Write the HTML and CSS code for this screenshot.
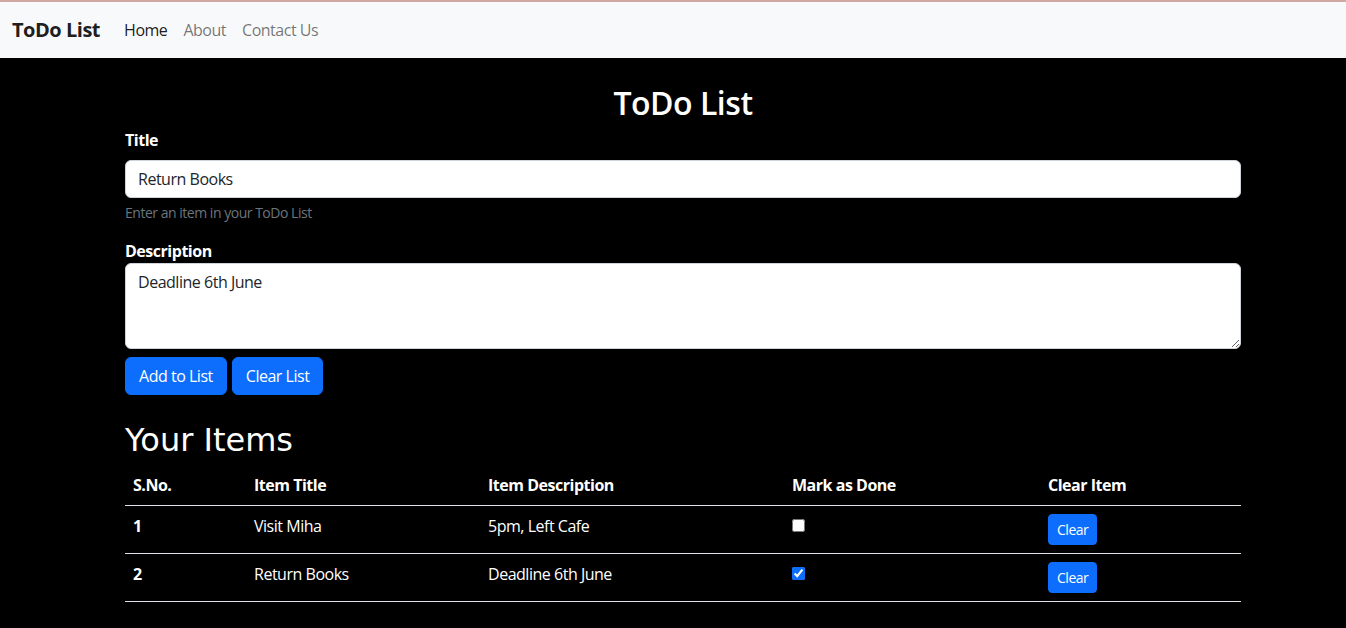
FILE: index.html
```html
<!DOCTYPE html>
<html lang="en">
<head>
<meta charset="utf-8">
<title>ToDo List</title>
<link rel="stylesheet" href="styles.css">
</head>
<body>
<nav class="navbar">
  <a class="brand" href="#">ToDo List</a>
  <ul class="nav-links">
    <li><a class="nav-link active" href="#">Home</a></li>
    <li><a class="nav-link" href="#">About</a></li>
    <li><a class="nav-link" href="#">Contact Us</a></li>
  </ul>
</nav>
<main class="container">
  <h2 class="page-title">ToDo List</h2>
  <div class="field field-title">
    <label class="label label-gap" for="title">Title</label>
    <input class="control" id="title" type="text" value="Return Books">
    <div class="form-text">Enter an item in your ToDo List</div>
  </div>
  <div class="field field-desc">
    <label class="label" for="desc">Description</label>
    <textarea class="control textarea" id="desc" rows="3">Deadline 6th June</textarea>
  </div>
  <div class="actions">
    <button class="btn">Add to List</button>
    <button class="btn">Clear List</button>
  </div>
  <h2 class="items-title">Your Items</h2>
  <table class="table">
    <thead>
      <tr>
        <th class="c1">S.No.</th>
        <th class="c2">Item Title</th>
        <th class="c3">Item Description</th>
        <th class="c4">Mark as Done</th>
        <th class="c5">Clear Item</th>
      </tr>
    </thead>
    <tbody>
      <tr>
        <th>1</th>
        <td>Visit Miha</td>
        <td>5pm, Left Cafe</td>
        <td><input class="check" type="checkbox"></td>
        <td><button class="btn btn-sm">Clear</button></td>
      </tr>
      <tr>
        <th>2</th>
        <td>Return Books</td>
        <td>Deadline 6th June</td>
        <td><input class="check" type="checkbox" checked></td>
        <td><button class="btn btn-sm">Clear</button></td>
      </tr>
    </tbody>
  </table>
</main>
</body>
</html>
```
FILE: styles.css
```css
* { box-sizing: border-box; }
html, body { margin: 0; padding: 0; }
body {
  background: #000;
  color: #fff;
  font-family: "Open Sans", "Noto Sans", sans-serif;
  font-size: 16px;
  line-height: 1.5;
  letter-spacing: -0.03em;
  min-height: 628px;
}
.navbar {
  display: flex;
  align-items: center;
  height: 58px;
  padding: 0 12px;
  background: #f8f9fa;
  border-top: 2px solid #d0a8a2;
}
.brand {
  font-size: 20px;
  font-weight: 700;
  color: rgba(0,0,0,.9);
  text-decoration: none;
  margin-right: 16px;
  line-height: 30px;
}
.nav-links {
  display: flex;
  list-style: none;
  margin: 0;
  padding: 0;
}
.nav-link {
  display: block;
  padding: 8px;
  color: rgba(0,0,0,.55);
  text-decoration: none;
}
.nav-link.active { color: rgba(0,0,0,.9); }
.container {
  width: 1116px;
  margin-left: 125px;
  padding: 0;
}
.page-title {
  font-size: 32px;
  font-weight: 600;
  line-height: 1.2;
  text-align: center;
  margin: 26px 0 6px;
}
.label {
  display: block;
  font-weight: 700;
}
.label-gap { margin-bottom: 8px; }
.field-title { margin-bottom: 16px; }
.field-desc { margin-bottom: 8px; }
.control {
  display: block;
  width: 100%;
  height: 38px;
  padding: 6px 12px;
  font: inherit;
  letter-spacing: inherit;
  color: #212529;
  background: #fff;
  border: 1px solid #ced4da;
  border-radius: 6px;
}
.textarea {
  height: 86px;
  resize: vertical;
}
.form-text {
  margin-top: 4px;
  font-size: 14px;
  color: #6c757d;
}
.actions {
  display: flex;
  gap: 5px;
}
.btn {
  font: inherit;
  letter-spacing: inherit;
  color: #fff;
  background: #0d6efd;
  border: 1px solid #0d6efd;
  border-radius: 6px;
  padding: 6px 13px;
  height: 38px;
  cursor: pointer;
}
.btn-sm {
  font-size: 14px;
  padding: 4px 8px;
  height: 31px;
  border-radius: 4px;
}
.items-title {
  font-family: "Comic Sans MS", "DejaVu Sans", cursive;
  font-weight: 400;
  font-size: 32px;
  line-height: 1.2;
  letter-spacing: 0;
  margin: 26px 0 5px;
}
.table {
  width: 100%;
  border-collapse: collapse;
}
.table th, .table td {
  text-align: left;
  vertical-align: top;
  padding: 8px;
  border-bottom: 1px solid #dee2e6;
}
.table thead th { vertical-align: bottom; }
.c1 { width: 121px; }
.c2 { width: 234px; }
.c3 { width: 304px; }
.c4 { width: 256px; }
.check {
  display: block;
  width: 13px;
  height: 13px;
  margin: 5px 0 0;
  accent-color: #0d6efd;
}
```
